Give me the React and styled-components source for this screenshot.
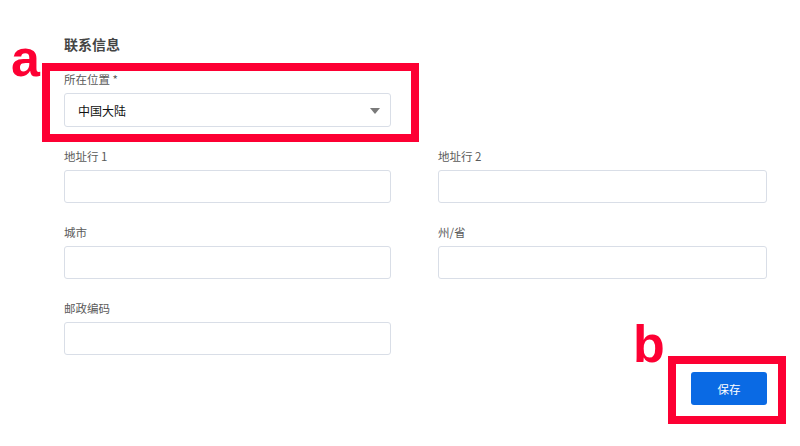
import React from "react";
import styled, { createGlobalStyle } from "styled-components";

const Global = createGlobalStyle`
  html, body { margin: 0; padding: 0; background: #ffffff; }
  body { font-family: "Noto Sans CJK SC", "Noto Sans", sans-serif; }
  * { box-sizing: border-box; }
`;

const Page = styled.div`
  position: relative;
  width: 800px;
  height: 446px;
  padding: 34px 0 0 64px;
  background: #fff;
  overflow: hidden;
`;

const Title = styled.h2`
  margin: 0 0 17px;
  font-size: 14px;
  line-height: 20px;
  font-weight: 700;
  color: #444444;
`;

const Form = styled.div`
  display: grid;
  grid-template-columns: 327px 329px;
  column-gap: 47px;
  row-gap: 21px;
  width: 703px;
`;

const Field = styled.div`
  display: flex;
  flex-direction: column;
  grid-column: ${(p) => (p.$full ? "1 / -1" : "auto")};
  width: ${(p) => (p.$full ? "327px" : "auto")};
`;

const Label = styled.label`
  font-size: 11.5px;
  line-height: 16px;
  color: #5a5a5a;
  margin-bottom: 6px;
`;

const Input = styled.div`
  height: ${(p) => p.$h || 33}px;
  border: 1px solid #d9dee7;
  border-radius: 3px;
  background: #fff;
`;

const Select = styled.div`
  height: 34px;
  border: 1px solid #d9dee7;
  border-radius: 3px;
  background: #fff;
  display: flex;
  align-items: center;
  justify-content: space-between;
  padding: 0 10px 0 13px;
  font-size: 12px;
  font-weight: 400;
  color: #111111;
`;

const Caret = styled.span`
  width: 0;
  height: 0;
  border-left: 5px solid transparent;
  border-right: 5px solid transparent;
  border-top: 6px solid #7a7a7a;
  margin-top: 2px;
`;

const Footer = styled.div`
  width: 703px;
  display: flex;
  justify-content: flex-end;
  margin-top: 17px;
`;

const Button = styled.button`
  width: 76px;
  height: 33px;
  border: none;
  border-radius: 3px;
  background: #0a6ae4;
  color: #fff;
  font-family: "Noto Sans CJK SC", sans-serif;
  font-size: 11.5px;
`;

const Callout = styled.div`
  position: absolute;
  left: ${(p) => p.$x}px;
  top: ${(p) => p.$y}px;
  width: ${(p) => p.$w}px;
  height: ${(p) => p.$h}px;
  border: 8px solid #fd0033;
  pointer-events: none;
`;

const Marker = styled.span`
  position: absolute;
  left: ${(p) => p.$x}px;
  top: ${(p) => p.$y}px;
  font-family: "Liberation Sans", Arial, sans-serif;
  font-weight: 700;
  font-size: 52px;
  line-height: 52px;
  color: #fd0033;
`;

export default function App() {
  return (
    <>
      <Global />
      <Page>
        <Title>联系信息</Title>
        <Form>
          <Field $full>
            <Label>所在位置 *</Label>
            <Select>
              <span>中国大陆</span>
              <Caret />
            </Select>
          </Field>
          <Field>
            <Label>地址行 1</Label>
            <Input />
          </Field>
          <Field>
            <Label>地址行 2</Label>
            <Input />
          </Field>
          <Field>
            <Label>城市</Label>
            <Input />
          </Field>
          <Field>
            <Label>州/省</Label>
            <Input />
          </Field>
          <Field>
            <Label>邮政编码</Label>
            <Input />
          </Field>
        </Form>
        <Footer>
          <Button>保存</Button>
        </Footer>
        <Callout $x={42} $y={63} $w={377} $h={79} />
        <Callout $x={668} $y={356} $w={118} $h={68} />
        <Marker $x={11} $y={32}>a</Marker>
        <Marker $x={633} $y={318}>b</Marker>
      </Page>
    </>
  );
}
